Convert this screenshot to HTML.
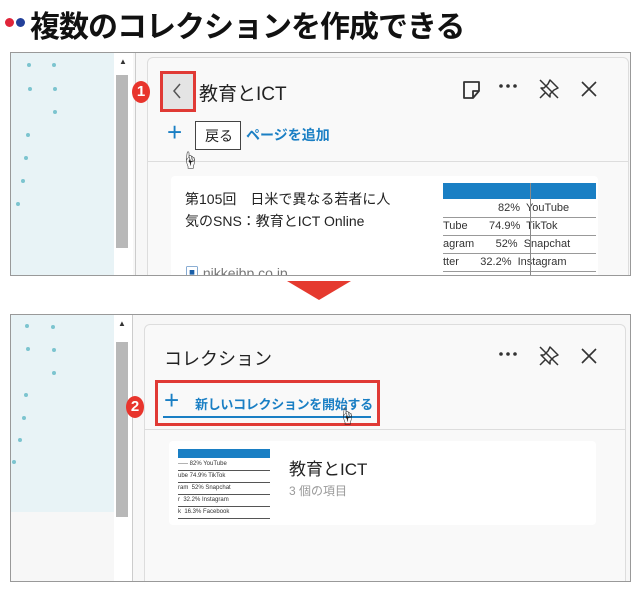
<!DOCTYPE html>
<html><head><meta charset="utf-8"><style>
*{margin:0;padding:0;box-sizing:border-box}
body{width:638px;height:599px;background:#fff;position:relative;overflow:hidden;font-family:"Liberation Sans","Noto Sans CJK JP",sans-serif;color:#222}
.a{position:absolute}
.box{position:absolute;left:10px;width:621px;border:1px solid #999;background:#f7f7f7;overflow:hidden}
.side{position:absolute;left:0;top:0;width:103px;background:#e8f3f6}
.dot{position:absolute;width:4px;height:4px;border-radius:50%;background:#7cc4cf}
.sb{position:absolute;left:103px;top:0;width:19px;height:100%;background:#fff}
.thumb{position:absolute;left:105px;width:12px;background:#b8b8b8}
.panel{position:absolute;background:#f9f9f9;border:1px solid #ddd;border-radius:6px}
.badge{position:absolute;width:18px;height:22px;border-radius:50%;background:#e8352d;color:#fff;font-weight:bold;font-size:15px;text-align:center;line-height:22px}
.card{position:absolute;background:#fff;border-radius:4px}
svg{position:absolute}
</style></head><body>
<div class="a" style="left:5px;top:18px;width:9px;height:9px;border-radius:50%;background:#e0253a"></div>
<div class="a" style="left:16px;top:18px;width:9px;height:9px;border-radius:50%;background:#23409a"></div>
<div class="a" style="left:30px;top:2px;font-size:30px;font-weight:bold;color:#111;letter-spacing:-1px">複数のコレクションを作成できる</div>

<div class="box" style="top:52px;height:224px">
 <div class="side" style="height:246px"></div>
 <div class="dot" style="left:16px;top:10px"></div><div class="dot" style="left:41px;top:10px"></div>
 <div class="dot" style="left:17px;top:34px"></div><div class="dot" style="left:42px;top:34px"></div>
 <div class="dot" style="left:42px;top:57px"></div><div class="dot" style="left:15px;top:80px"></div>
 <div class="dot" style="left:13px;top:103px"></div><div class="dot" style="left:10px;top:126px"></div><div class="dot" style="left:5px;top:149px"></div>
 <div class="sb"></div><div class="thumb" style="top:22px;height:173px"></div>
 <div class="a" style="left:108px;top:4px;font-size:8px;color:#333">▲</div>
 <div class="a" style="left:124px;top:0;width:1px;height:100%;background:#ccc"></div>
 <div class="panel" style="left:136px;top:4px;width:482px;height:240px"></div>
 <div class="a" style="left:136px;top:108px;width:482px;height:1px;background:#ddd"></div>
 <div class="a" style="left:149px;top:18px;width:36px;height:41px;border:3px solid #e03a35;background:#e4e4e4"></div>
 <svg style="left:160px;top:28px" width="12" height="20"><path d="M9 3 L3 10 L9 17" fill="none" stroke="#555" stroke-width="1.5"/></svg>
 <div class="badge" style="left:121px;top:28px">1</div>
 <div class="a" style="left:188px;top:26px;font-size:19px;color:#222">教育とICT</div>
 <svg style="left:450px;top:26px" width="22" height="22"><path d="M3 3 H18 V12 L12 19 H3 Z M12 19 V12 H18" fill="none" stroke="#333" stroke-width="1.8" stroke-linejoin="round"/></svg>
 <svg style="left:486px;top:28px" width="22" height="10"><circle cx="4" cy="5" r="1.8" fill="#333"/><circle cx="11" cy="5" r="1.8" fill="#333"/><circle cx="18" cy="5" r="1.8" fill="#333"/></svg>
 <svg style="left:526px;top:24px" width="24" height="24"><path d="M13 3 L21 11 L17 13 L13 17 L13 20 L4 11 L7 11 L11 7 Z M8 16 L3 21 M3 3 L21 21" fill="none" stroke="#333" stroke-width="1.5" stroke-linejoin="round"/></svg>
 <svg style="left:568px;top:26px" width="20" height="20"><path d="M3 3 L17 17 M17 3 L3 17" stroke="#333" stroke-width="1.6"/></svg>
 <div class="a" style="left:156px;top:64px;font-size:26px;color:#1a7fc4">+</div>
 <div class="a" style="left:235px;top:72px;font-size:14px;color:#1a7fc4;font-weight:bold">ページを追加</div>
 <div class="a" style="left:184px;top:68px;width:46px;height:29px;border:1px solid #444;background:#fff;font-size:14px;padding:4px 0 0 9px">戻る</div>
 <div class="a" style="left:170px;top:94px;font-size:18px">☝</div>
 <div class="card" style="left:160px;top:123px;width:427px;height:120px"></div>
 <div class="a" style="left:174px;top:135px;font-size:14px;line-height:22px">第105回　日米で異なる若者に人<br>気のSNS：教育とICT Online</div>
 <div class="a" style="left:174px;top:210px;font-size:14px;color:#777"><span style="color:#1a5fa8">▣</span> nikkeibp.co.jp</div>
 <div class="a" style="left:432px;top:130px;width:153px;height:16px;background:#1a7fc4"></div>
 <div class="a" style="left:432px;top:147px;width:153px;font-size:11px;line-height:17px;color:#333">
  <div style="border-bottom:1px solid #999">&nbsp;&nbsp;&nbsp;&nbsp;&nbsp;&nbsp;&nbsp;&nbsp;&nbsp;&nbsp;&nbsp;&nbsp;&nbsp;&nbsp;&nbsp;&nbsp;&nbsp;&nbsp;82%&nbsp; YouTube</div>
  <div style="border-bottom:1px solid #999">Tube &nbsp;&nbsp;&nbsp;&nbsp;&nbsp;&nbsp;74.9%&nbsp; TikTok</div>
  <div style="border-bottom:1px solid #999">agram &nbsp;&nbsp;&nbsp;&nbsp;&nbsp;&nbsp;52%&nbsp; Snapchat</div>
  <div style="border-bottom:1px solid #999">tter &nbsp;&nbsp;&nbsp;&nbsp;&nbsp;&nbsp;32.2%&nbsp; Instagram</div>
 </div>
 <div class="a" style="left:519px;top:130px;width:1px;height:94px;background:#888"></div>
</div>

<div class="a" style="left:287px;top:281px;width:0;height:0;border-left:32px solid transparent;border-right:32px solid transparent;border-top:19px solid #e53a2f"></div>

<div class="box" style="top:314px;height:268px">
 <div class="side" style="height:197px"></div>
 <div class="dot" style="left:14px;top:9px"></div><div class="dot" style="left:40px;top:10px"></div>
 <div class="dot" style="left:15px;top:32px"></div><div class="dot" style="left:41px;top:33px"></div>
 <div class="dot" style="left:41px;top:56px"></div><div class="dot" style="left:13px;top:78px"></div>
 <div class="dot" style="left:11px;top:101px"></div><div class="dot" style="left:7px;top:123px"></div><div class="dot" style="left:1px;top:145px"></div>
 <div class="sb"></div><div class="thumb" style="top:27px;height:175px"></div>
 <div class="a" style="left:107px;top:4px;font-size:8px;color:#333">▲</div>
 <div class="a" style="left:121px;top:0;width:1px;height:100%;background:#ccc"></div>
 <div class="panel" style="left:133px;top:9px;width:482px;height:270px"></div>
 <div class="a" style="left:133px;top:114px;width:482px;height:1px;background:#ddd"></div>
 <div class="a" style="left:153px;top:30px;font-size:18px;color:#222">コレクション</div>
 <svg style="left:486px;top:34px" width="22" height="10"><circle cx="4" cy="5" r="1.8" fill="#333"/><circle cx="11" cy="5" r="1.8" fill="#333"/><circle cx="18" cy="5" r="1.8" fill="#333"/></svg>
 <svg style="left:526px;top:29px" width="24" height="24"><path d="M13 3 L21 11 L17 13 L13 17 L13 20 L4 11 L7 11 L11 7 Z M8 16 L3 21 M3 3 L21 21" fill="none" stroke="#333" stroke-width="1.5" stroke-linejoin="round"/></svg>
 <svg style="left:568px;top:31px" width="20" height="20"><path d="M3 3 L17 17 M17 3 L3 17" stroke="#333" stroke-width="1.6"/></svg>
 <div class="badge" style="left:115px;top:81px">2</div>
 <div class="a" style="left:144px;top:65px;width:225px;height:46px;border:3px solid #e03a35"></div>
 <div class="a" style="left:153px;top:70px;font-size:26px;color:#1a7fc4">+</div>
 <div class="a" style="left:184px;top:79px;font-size:13px;color:#1a7fc4;font-weight:bold;letter-spacing:-0.3px">新しいコレクションを開始する</div>
 <div class="a" style="left:152px;top:101px;width:208px;height:2px;background:#1a7fc4"></div>
 <div class="a" style="left:327px;top:88px;font-size:18px">☝</div>
 <div class="card" style="left:158px;top:126px;width:427px;height:84px"></div>
 <div class="a" style="left:167px;top:134px;width:92px;height:9px;background:#1a7fc4"></div>
 <div class="a" style="left:167px;top:144px;width:92px;font-size:6px;line-height:11px;color:#333">
  <div style="border-bottom:1px solid #555">----- 82% YouTube</div><div style="border-bottom:1px solid #555">ube 74.9% TikTok</div><div style="border-bottom:1px solid #555">ram &nbsp;52% Snapchat</div><div style="border-bottom:1px solid #555">r &nbsp;32.2% Instagram</div><div style="border-bottom:1px solid #555">k &nbsp;16.3% Facebook</div>
 </div>
 <div class="a" style="left:278px;top:140px;font-size:17px;color:#222">教育とICT</div>
 <div class="a" style="left:278px;top:167px;font-size:12px;color:#999">3 個の項目</div>
</div>
</body></html>
